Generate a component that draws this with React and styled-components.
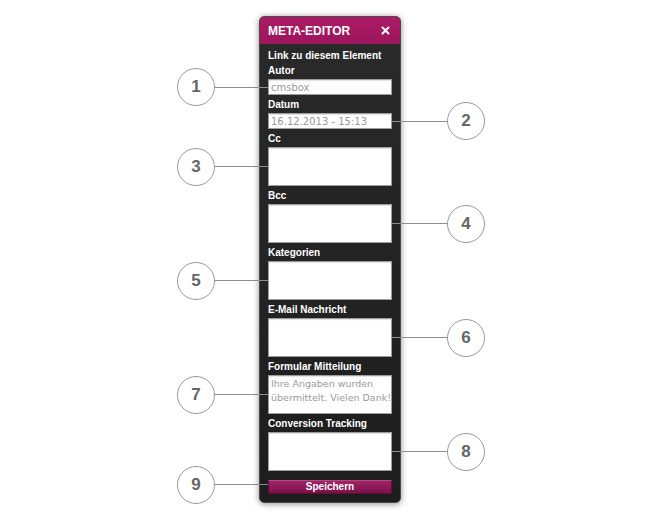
import React from "react";
import styled, { createGlobalStyle } from "styled-components";

const Global = createGlobalStyle`
  html, body { margin: 0; padding: 0; background: #fff; }
  body { font-family: "Liberation Sans", Arial, sans-serif; }
`;

const Stage = styled.div`
  display: flex;
  justify-content: center;
  padding-top: 16px;
  height: 524px;
  box-sizing: border-box;
`;

const Panel = styled.div`
  width: 142px;
  height: 487px;
  box-sizing: border-box;
  border: 1px solid #4a4a4a;
  border-radius: 5px;
  background: linear-gradient(#2a2a2a, #1d1d1d);
  box-shadow: 0 1px 6px rgba(0, 0, 0, 0.45);
  display: flex;
  flex-direction: column;
`;

const TitleBar = styled.div`
  height: 27px;
  display: flex;
  align-items: center;
  justify-content: space-between;
  padding: 0 10px 0 8px;
  border-radius: 4px 4px 0 0;
  background: linear-gradient(#ad1b66, #9c165c);
  color: #fff;
  font-size: 12px;
  font-weight: bold;
`;

const Body = styled.div`
  padding: 6px 8px 8px;
  display: flex;
  flex-direction: column;
`;

const LinkLabel = styled.div`
  color: #fff;
  font-size: 10px;
  font-weight: bold;
  line-height: 12px;
  margin-bottom: 3px;
`;

const Field = styled.div`
  display: flex;
  flex-direction: column;
  margin-bottom: 4px;
`;

const Label = styled.label`
  color: #fff;
  font-size: 10px;
  font-weight: bold;
  line-height: 12px;
  margin-bottom: 2px;
`;

const Anchor = styled.div`
  position: relative;
  display: flex;
`;

const TextInput = styled.input`
  width: 124px;
  height: 16px;
  box-sizing: border-box;
  margin: 0;
  border: 1px solid #9d9d9d;
  box-shadow: inset 0 1px 1px rgba(0, 0, 0, 0.12);
  padding: 0 2px;
  background: #fff;
  font-family: "DejaVu Sans", sans-serif;
  font-size: 10px;
  color: #9a9a9a;
  outline: none;
`;

const Area = styled.textarea`
  width: 124px;
  height: 39px;
  box-sizing: border-box;
  margin: 0;
  border: 1px solid #9d9d9d;
  box-shadow: inset 0 1px 1px rgba(0, 0, 0, 0.12);
  padding: 1px 2px;
  background: #fff;
  font-family: "DejaVu Sans", sans-serif;
  font-size: 9.5px;
  line-height: 14px;
  color: #9a9a9a;
  resize: none;
  overflow: hidden;
  white-space: pre;
  outline: none;
  display: block;
`;

const SaveButton = styled.button`
  margin-top: 5px;
  width: 124px;
  height: 14px;
  box-sizing: border-box;
  padding: 0;
  border: 1px solid #5e0f37;
  border-top-color: #b04a80;
  background: linear-gradient(#a02468, #7a1249);
  color: #fff;
  font-family: "Liberation Sans", Arial, sans-serif;
  font-size: 10px;
  font-weight: bold;
  line-height: 12px;
  cursor: pointer;
`;

const Callout = styled.div`
  position: absolute;
  top: 50%;
  transform: translateY(-50%);
  display: flex;
  align-items: center;
  ${(p) => (p.$side === "left" ? "right: 100%;" : "left: 100%;")}
`;

const Line = styled.div`
  width: ${(p) => p.$len}px;
  height: 1px;
  background: #8e8e8e;
`;

const Circle = styled.div`
  width: 38px;
  height: 38px;
  box-sizing: border-box;
  border: 1px solid #9a9a9a;
  border-radius: 50%;
  background: #fff;
  display: flex;
  align-items: center;
  justify-content: center;
  color: #666;
  font-size: 17px;
  font-weight: bold;
`;

const CloseIcon = () => (
  <svg width="9" height="9" viewBox="0 0 9 9">
    <path d="M1.5 1.5 L7.5 7.5 M7.5 1.5 L1.5 7.5" stroke="#fff" strokeWidth="2" strokeLinecap="round" />
  </svg>
);

const Mark = ({ n, side }) => (
  <Callout $side={side}>
    {side === "left" ? (
      <>
        <Circle>{n}</Circle>
        <Line $len={53} />
      </>
    ) : (
      <>
        <Line $len={55} />
        <Circle>{n}</Circle>
      </>
    )}
  </Callout>
);

const areas = [
  { label: "Cc", n: 3, side: "left", value: "" },
  { label: "Bcc", n: 4, side: "right", value: "" },
  { label: "Kategorien", n: 5, side: "left", value: "" },
  { label: "E-Mail Nachricht", n: 6, side: "right", value: "" },
  { label: "Formular Mitteilung", n: 7, side: "left", value: "Ihre Angaben wurden\nübermittelt. Vielen Dank!" },
  { label: "Conversion Tracking", n: 8, side: "right", value: "" },
];

export default function App() {
  return (
    <>
      <Global />
      <Stage>
        <Panel>
          <TitleBar>
            <span>META-EDITOR</span>
            <CloseIcon />
          </TitleBar>
          <Body>
            <LinkLabel>Link zu diesem Element</LinkLabel>
            <Field>
              <Label>Autor</Label>
              <Anchor>
                <TextInput readOnly value="cmsbox" />
                <Mark n={1} side="left" />
              </Anchor>
            </Field>
            <Field>
              <Label>Datum</Label>
              <Anchor>
                <TextInput readOnly value="16.12.2013 - 15:13" />
                <Mark n={2} side="right" />
              </Anchor>
            </Field>
            {areas.map((a) => (
              <Field key={a.label}>
                <Label>{a.label}</Label>
                <Anchor>
                  <Area readOnly value={a.value} />
                  <Mark n={a.n} side={a.side} />
                </Anchor>
              </Field>
            ))}
            <Anchor>
              <SaveButton>Speichern</SaveButton>
              <Mark n={9} side="left" />
            </Anchor>
          </Body>
        </Panel>
      </Stage>
    </>
  );
}
